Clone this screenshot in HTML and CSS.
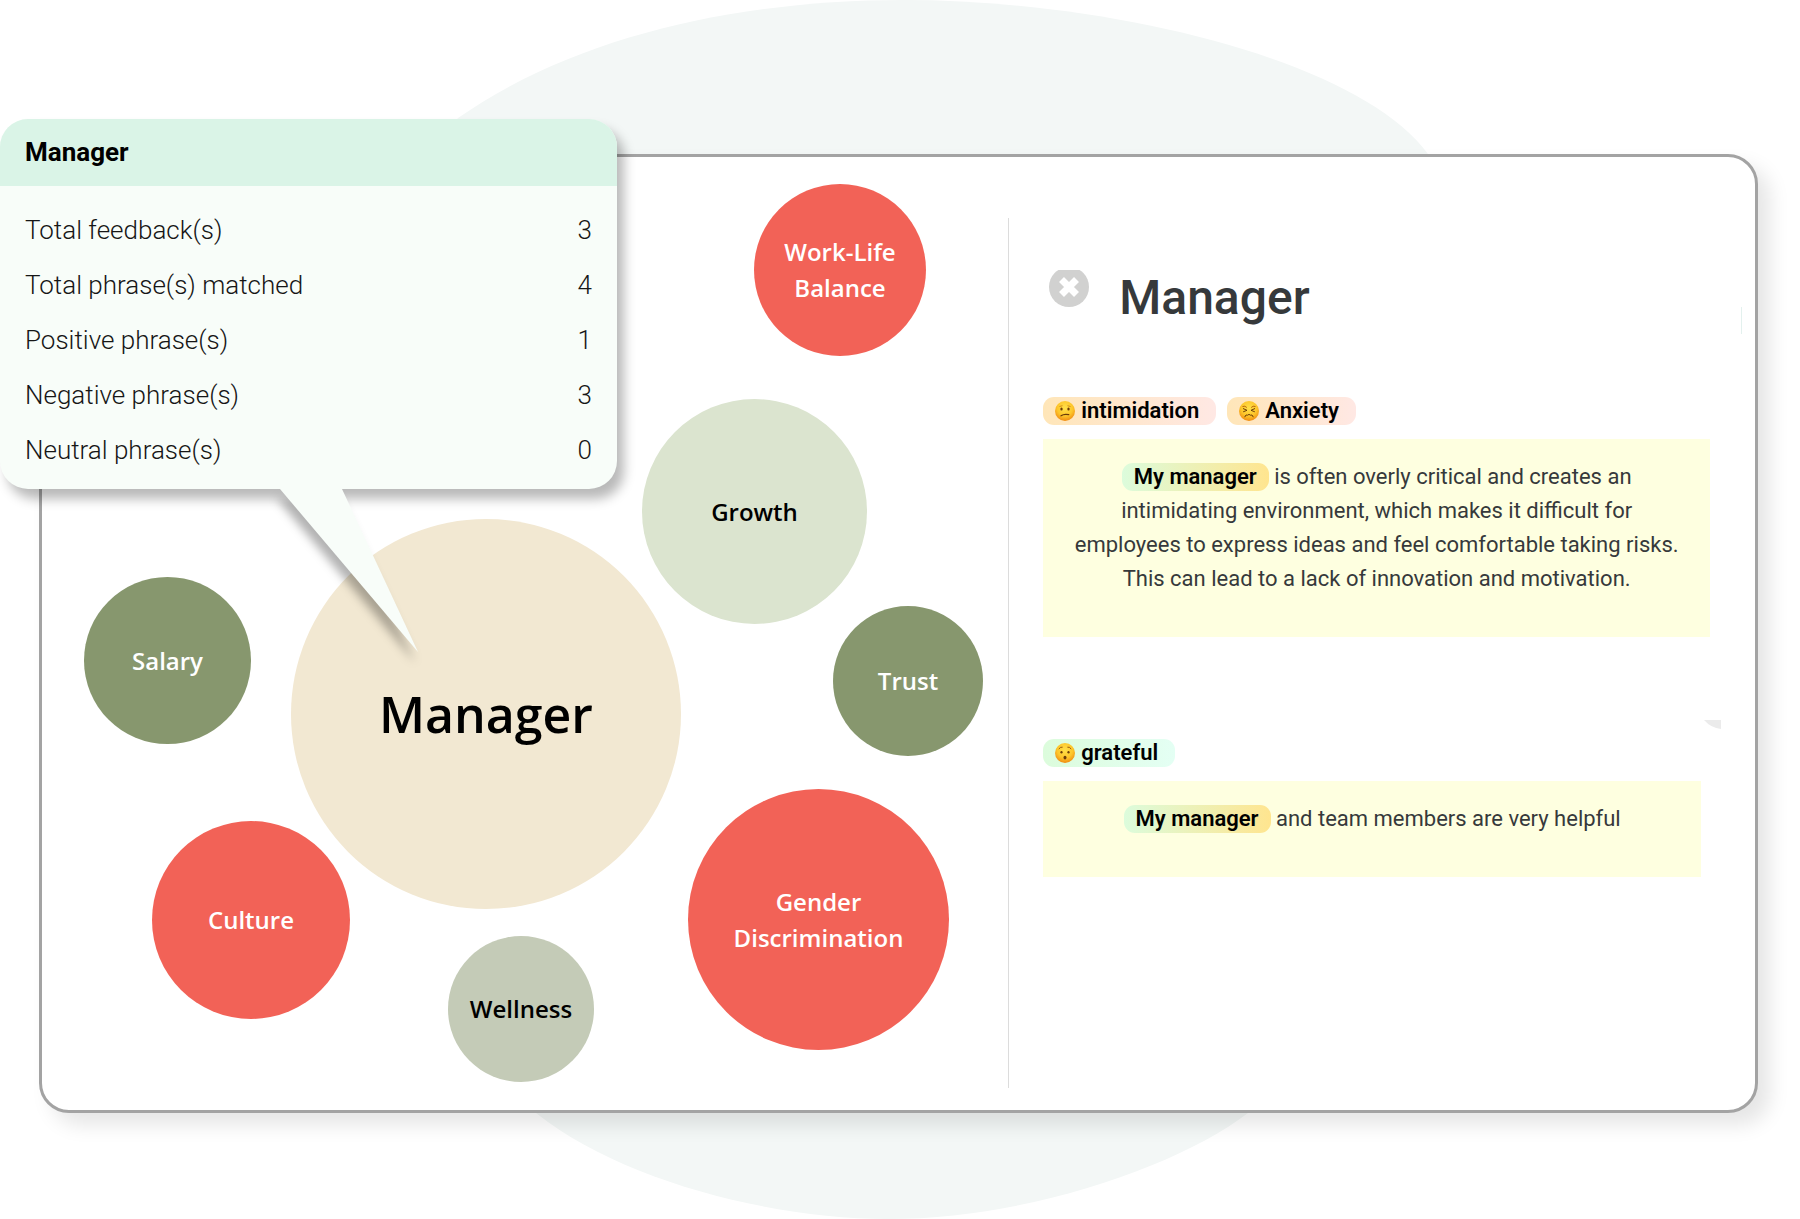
FILE: index.html
```html
<!DOCTYPE html>
<html lang="en">
<head>
    <meta charset="utf-8">
    <meta name="viewport" content="width=device-width, initial-scale=1">
    <title>Manager feedback</title>
    <link rel="stylesheet" href="styles.css">
</head>
<body>
    <div class="page">
        <svg class="backdrop" viewBox="0 0 1800 1219" preserveAspectRatio="none" aria-hidden="true">
            <path d="M904 0C1110 0 1360 60 1428 154C1540 450 1480 880 1248 1113C1180 1165 1030 1219 888 1219C770 1219 620 1180 536 1113C250 860 230 370 458 118C575 36 740 0 904 0Z"/>
        </svg>

        <main class="panel">
            <section class="bubbles" aria-label="Topics">
                <div class="bubble work-life">Work-Life<br>Balance</div>
                <div class="bubble growth">Growth</div>
                <div class="bubble manager">Manager</div>
                <div class="bubble trust">Trust</div>
                <div class="bubble salary">Salary</div>
                <div class="bubble culture">Culture</div>
                <div class="bubble gender">Gender<br>Discrimination</div>
                <div class="bubble wellness">Wellness</div>
            </section>

            <section class="detail">
                <header class="detail-header">
                    <button class="close" type="button" aria-label="Close">
                        <svg width="40" height="37" viewBox="0 3 40 37">
                            <circle cx="20" cy="20" r="20" fill="#d1d1d0"/>
                            <path d="M12.500 12.500L27.500 27.500M27.500 12.500L12.500 27.500" stroke="#fff" stroke-width="7"/>
                        </svg>
                    </button>
                    <h1>Manager</h1>
                </header>

                <article class="feedback">
                    <div class="tags">
                        <span class="tag negative">
                            <svg class="face" viewBox="0 0 20 20" aria-hidden="true">
                                <circle cx="10" cy="10" r="10" fill="url(#skin)"/>
                                <ellipse cx="6.500" cy="8" rx="1.200" ry="1.500" fill="#6b3c08"/>
                                <ellipse cx="13.500" cy="8" rx="1.200" ry="1.500" fill="#6b3c08"/>
                                <path d="M4.500 5.500L7.500 4.700M12.500 4.700L15.500 5.500" stroke="#c77a10" stroke-width=".8" fill="none"/>
                                <path d="M6 14.800Q9 12.600 13.800 13.700" stroke="#6b3c08" stroke-width="1.200" stroke-linecap="round" fill="none"/>
                            </svg>
                            intimidation
                        </span>
                        <span class="tag negative">
                            <svg class="face" viewBox="0 0 20 20" aria-hidden="true">
                                <circle cx="10" cy="10" r="10" fill="url(#skin)"/>
                                <path d="M3.500 5.500Q6 4.500 7.800 6.500M16.500 5.500Q14 4.500 12.200 6.500" stroke="#b8660c" stroke-width="1" fill="none"/>
                                <path d="M4 7.500L8 9.300L4.200 10.800M16 7.500L12 9.300L15.800 10.800" stroke="#6b3c08" stroke-width="1" stroke-linejoin="round" fill="none"/>
                                <path d="M5.800 15.800Q7 12.800 8.500 14.200Q10 12.600 11.500 14.200Q13 12.800 14.200 15.800" stroke="#6b3c08" stroke-width="1" stroke-linecap="round" fill="none"/>
                            </svg>
                            Anxiety
                        </span>
                    </div>
                    <p class="quote"><mark>My manager</mark> is often overly critical and creates an intimidating environment, which makes it difficult for employees to express ideas and feel comfortable taking risks. This can lead to a lack of innovation and motivation.</p>
                </article>

                <article class="feedback short">
                    <div class="tags">
                        <span class="tag positive">
                            <svg class="face" viewBox="0 0 20 20" aria-hidden="true">
                                <circle cx="10" cy="10" r="10" fill="url(#skin)"/>
                                <ellipse cx="6.500" cy="9.200" rx="1.100" ry="1.300" fill="#6b3c08"/>
                                <ellipse cx="13.500" cy="9.200" rx="1.100" ry="1.300" fill="#6b3c08"/>
                                <path d="M3.800 6Q5.500 3.600 7.600 4.200M16.200 6Q14.500 3.600 12.400 4.200" stroke="#8a4c08" stroke-width=".9" fill="none"/>
                                <ellipse cx="10" cy="14.600" rx="1.500" ry="1.900" fill="#6b3c08"/>
                            </svg>
                            grateful
                        </span>
                    </div>
                    <p class="quote"><mark>My manager</mark> and team members are very helpful</p>
                </article>

                <span class="scroll-mark"></span>
                <svg class="corner-mark" viewBox="0 0 17 9" aria-hidden="true"><path d="M0 0H17V9Q7 8 0 0Z"/></svg>
            </section>
        </main>

        <aside class="tooltip">
            <div class="tooltip-card">
                <h2>Manager</h2>
                <table>
                    <tr><th scope="row">Total feedback(s)</th><td>3</td></tr>
                    <tr><th scope="row">Total phrase(s) matched</th><td>4</td></tr>
                    <tr><th scope="row">Positive phrase(s)</th><td>1</td></tr>
                    <tr><th scope="row">Negative phrase(s)</th><td>3</td></tr>
                    <tr><th scope="row">Neutral phrase(s)</th><td>0</td></tr>
                </table>
            </div>
            <svg class="tooltip-tail" viewBox="0 0 138 163" aria-hidden="true"><path d="M0 0H62L138 163Z"/></svg>
        </aside>
    </div>

    <!-- shared fill for the faces -->
    <svg class="defs" aria-hidden="true">
        <radialGradient id="skin" cx=".5" cy=".35" r=".65">
            <stop offset="0" stop-color="#ffe04a"/>
            <stop offset=".6" stop-color="#fdc62b"/>
            <stop offset="1" stop-color="#f08c12"/>
        </radialGradient>
    </svg>
</body>
</html>
```
FILE: styles.css
```css
:root {
    --red: #f26257;
    --olive: #87976e;
    --sand: #f2e8d2;
    --border-color: #a3a3a3;
    --text-primary: #000000;
    --text-secondary: #36393b;
    --quote-bg: #feffe0;
}

* {
    box-sizing: border-box;
}

body {
    margin: 0;
    font-family: Roboto, "Noto Sans", sans-serif;
    color: var(--text-primary);
    background-color: #ffffff;
}

h1, h2, p {
    margin: 0;
}

.page {
    position: relative;
    padding: 154px 42px 106px 39px;
    overflow: hidden;
}

.backdrop {
    position: absolute;
    inset: 0;
    width: 100%;
    height: 100%;
    fill: #f3f7f6;
}

.defs {
    position: absolute;
    width: 0;
    height: 0;
}

.panel {
    position: relative;
    display: grid;
    grid-template-columns: 22fr 17fr;
    min-height: 959px;
    background-color: #ffffff;
    border: 3px solid var(--border-color);
    border-radius: 30px;
    box-shadow: 12px 12px 20px rgba(0, 0, 0, 0.1);
}

/* Bubble chart */
.bubbles {
    position: relative;
    font-family: "Open Sans", sans-serif;
    font-size: 24px;
    font-weight: 600;
    line-height: 36px;
}

.bubble {
    position: absolute;
    display: flex;
    align-items: center;
    justify-content: center;
    text-align: center;
    border-radius: 50%;
    aspect-ratio: 1;
}

.work-life {
    left: 712px;
    top: 27px;
    width: 172px;
    background-color: var(--red);
    color: white;
}

.growth {
    left: 600px;
    top: 242px;
    width: 225px;
    background-color: #dbe4cf;
}

.manager {
    left: 249px;
    top: 362px;
    width: 390px;
    background-color: var(--sand);
    font-size: 50px;
}

.trust {
    left: 791px;
    top: 449px;
    width: 150px;
    background-color: var(--olive);
    color: white;
}

.salary {
    left: 42px;
    top: 420px;
    width: 167px;
    background-color: var(--olive);
    color: white;
}

.culture {
    left: 110px;
    top: 664px;
    width: 198px;
    background-color: var(--red);
    color: white;
}

.gender {
    left: 646px;
    top: 632px;
    width: 261px;
    background-color: var(--red);
    color: white;
}

.wellness {
    left: 406px;
    top: 779px;
    width: 146px;
    background-color: #c4cbb7;
}

/* Detail column */
.detail {
    position: relative;
    padding: 113px 45px 40px 35px;
}

.detail::before {
    content: "";
    position: absolute;
    left: 0;
    top: 61px;
    bottom: 22px;
    border-left: 1px solid #dcdcdc;
}

.detail-header {
    display: flex;
    align-items: flex-start;
    gap: 30px;
    padding-left: 6px;
    margin-bottom: 71px;
}

.close {
    padding: 0;
    border: none;
    background: none;
    cursor: pointer;
}

.close svg {
    display: block;
}

.detail-header h1 {
    font-size: 48px;
    font-weight: 500;
    line-height: 56px;
    color: var(--text-secondary);
}

.feedback {
    margin-bottom: 102px;
}

.feedback.short {
    margin-right: 9px;
}

.tags {
    display: flex;
    gap: 11px;
    margin-bottom: 14px;
}

.tag {
    display: flex;
    align-items: center;
    gap: 6px;
    padding: 0 17px 0 12px;
    border-radius: 11px;
    font-size: 22px;
    font-weight: 600;
    line-height: 28px;
}

.negative {
    background: linear-gradient(90deg, #ffe6b8, #ffe8e4);
}

.positive {
    background: linear-gradient(90deg, #dcfcdc, #e4fff4);
}

.face {
    width: 20px;
    height: 20px;
}

.quote {
    padding: 21px 28px 41px;
    background-color: var(--quote-bg);
    color: var(--text-secondary);
    font-size: 22px;
    line-height: 34px;
    text-align: center;
}

.quote mark {
    display: inline-block;
    padding: 0 12px;
    border-radius: 11px;
    background: linear-gradient(90deg, #dcfcdc, #ffe58f);
    color: var(--text-primary);
    font-weight: 600;
    line-height: 28px;
}

.scroll-mark {
    position: absolute;
    right: 13px;
    top: 150px;
    height: 27px;
    border-left: 1px solid #e3f1ee;
}

.corner-mark {
    position: absolute;
    right: 34px;
    top: 563px;
    width: 17px;
    height: 9px;
    fill: #ebebeb;
}

/* Tooltip over the chart */
.tooltip {
    position: absolute;
    left: 0;
    top: 119px;
    width: 617px;
}

.tooltip-card {
    border-radius: 28px;
    background-color: #f8fdf9;
    box-shadow: 7px 10px 12px rgba(0, 0, 0, 0.28);
}

.tooltip h2 {
    padding: 0 25px;
    border-radius: 28px 28px 0 0;
    background-color: #daf4e7;
    font-size: 26px;
    font-weight: 700;
    line-height: 67px;
}

.tooltip table {
    width: 100%;
    padding: 17px 25px 11px;
    border-spacing: 0;
    font-size: 26px;
    line-height: 55px;
}

.tooltip th,
.tooltip td {
    padding: 0;
    font-weight: 300;
    text-align: left;
    color: #161616;
}

.tooltip td {
    text-align: right;
}

.tooltip-tail {
    position: absolute;
    left: 280px;
    top: 100%;
    width: 138px;
    height: 163px;
    overflow: visible;
    fill: #f8fdf9;
    filter: drop-shadow(-3px 10px 5px rgba(0, 0, 0, 0.3));
}
```
